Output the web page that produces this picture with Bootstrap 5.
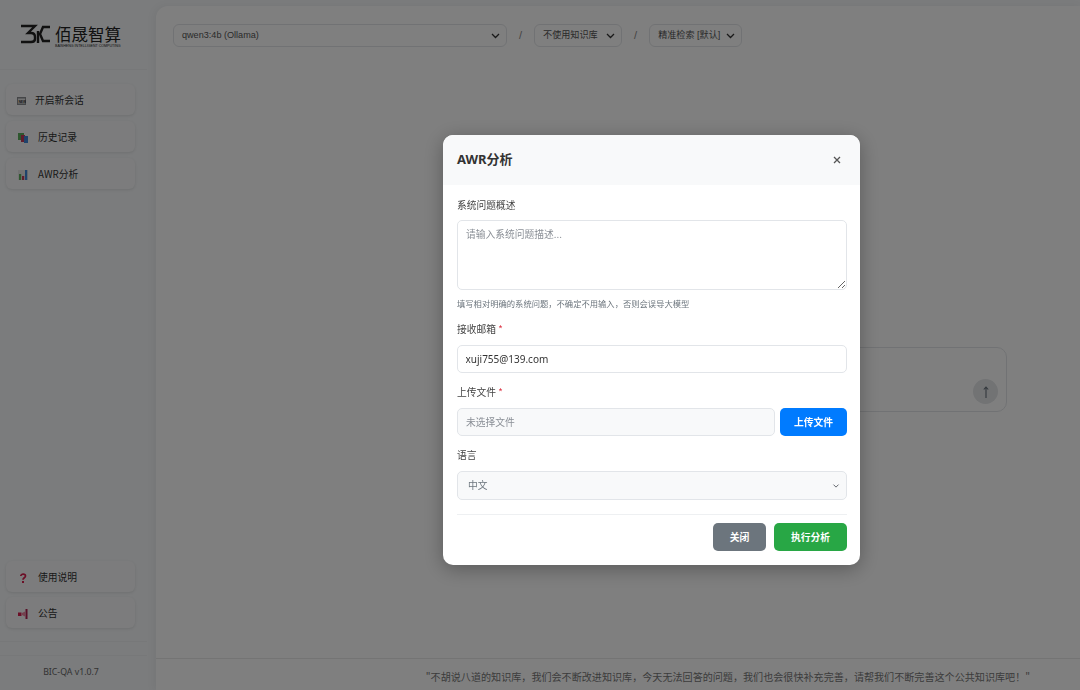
<!DOCTYPE html>
<html lang="zh-CN">
<head>
    <meta charset="UTF-8">
    <meta name="viewport" content="width=device-width, initial-scale=1.0">
    <title>BIC-QA</title>
    <link href="https://cdn.jsdelivr.net/npm/bootstrap@5.3.0/dist/css/bootstrap.min.css" rel="stylesheet">
    <script src="https://cdn.jsdelivr.net/npm/bootstrap@5.3.0/dist/js/bootstrap.bundle.min.js"></script>
    <style>
        html, body {
            height: 100%;
            overflow: hidden;
        }

        body {
            font-family: "Liberation Sans", "Noto Sans CJK SC", sans-serif;
            background-color: #f6f8fa;
            color: #333;
            font-size: 10px;
        }

        /* sidebar */
        .app-side {
            width: 156px;
            height: 690px;
            flex-shrink: 0;
        }

        .logo-box {
            height: 70px;
            padding: 24px 0 0 20px;
            border-bottom: 1px solid #eef0f2;
            margin-right: 9px;
        }

        .logo-name {
            font-family: "Noto Sans CJK SC", sans-serif;
            font-size: 16.5px;
            line-height: 20px;
            font-weight: 400;
            color: #222;
        }

        .logo-sub {
            font-size: 3.6px;
            line-height: 4px;
            color: #222;
            white-space: nowrap;
        }

        .side-stack {
            gap: 6px;
            padding-top: 14px;
        }

        .side-stack-low {
            gap: 5px;
            margin-top: auto;
            margin-bottom: 13px;
        }

        .side-btn {
            width: 129px;
            height: 31px;
            margin-left: 6px;
            padding-top: 2px;
            background: #f8f9fa;
            border-radius: 6px;
            box-shadow: 0 1px 3px rgba(0, 0, 0, 0.1);
            font-family: "Noto Sans CJK SC", sans-serif;
            font-size: 9.75px;
            color: #333;
            padding-left: 12px;
            gap: 10px;
        }

        .side-btn.side-new {
            padding-left: 11px;
            gap: 9px;
        }

        .side-btn svg {
            flex-shrink: 0;
        }

        .side-foot {
            margin-right: 9px;
            height: 49px;
            border-top: 1px solid #eef0f2;
        }

        .side-foot-inner {
            margin-top: 13px;
            padding: 10px 5px 0 0;
            border-top: 1px solid #eef0f2;
            text-align: center;
            font-size: 8.75px;
            font-family: "Noto Sans", sans-serif;
            color: #666;
        }

        /* main */
        .app-main {
            margin-top: 6px;
            height: 684px;
            background: #fff;
            border-top-left-radius: 12px;
            box-shadow: -2px 0 8px rgba(0, 0, 0, 0.05);
            position: relative;
        }

        .top-row {
            padding: 18px 0 0 17px;
            gap: 12px;
        }

        .top-select {
            height: 23px;
            border: 1px solid #e3e5e8;
            border-radius: 6px;
            padding: 0 6px 0 8px;
            font-size: 9.1px;
            color: #555;
        }

        .slash-mark {
            font-size: 11px;
            color: #888;
        }

        .ask-box {
            position: absolute;
            left: 320px;
            top: 341px;
            width: 531px;
            height: 65px;
            border: 1px solid #e3e5e8;
            border-radius: 10px;
        }

        .send-btn {
            position: absolute;
            right: 8px;
            bottom: 7px;
            width: 25px;
            height: 25px;
            border-radius: 50%;
            background: #e4e6e9;
        }

        .quote-bar {
            position: absolute;
            left: 0;
            right: 0;
            bottom: 0;
            height: 32px;
            border-top: 1px solid #e8e8e8;
            padding: 10px 50px 0 0;
            text-align: right;
            font-family: "Noto Sans CJK SC", sans-serif;
            font-size: 10.08px;
            color: #777;
        }

        /* modal */
        .awr-dialog {
            width: 417px;
            max-width: 417px;
            margin: 135px 0 0 443px;
        }

        .awr-content {
            border: 0;
            border-radius: 10px;
            height: 430px;
            box-shadow: 0 4px 20px rgba(0, 0, 0, 0.3);
            font-family: "Noto Sans CJK SC", sans-serif;
            overflow: hidden;
        }

        .awr-head {
            height: 50px;
            background: #f8f9fa;
            border: 0;
            padding: 0 19px 0 14px;
        }

        .awr-title {
            font-size: 13px;
            font-weight: 700;
            color: #333;
            font-family: "Noto Sans", "Noto Sans CJK SC", sans-serif;
        }

        .awr-close {
            background: none;
            border: 0;
            padding: 0;
            line-height: 0;
        }

        .awr-body {
            padding: 13px 13px 0 14px;
        }

        .awr-label {
            font-size: 9.75px;
            line-height: 15px;
            color: #444;
            margin-bottom: 8px;
            display: block;
        }

        .awr-label-first {
            margin-bottom: 7px;
        }

        .awr-req {
            color: #dc3545;
        }

        .awr-input {
            font-family: "Noto Sans", "Noto Sans CJK SC", sans-serif;
            font-size: 10px;
            color: #333;
            border: 1px solid #e2e5e9;
            border-radius: 5px;
            height: 28px;
            padding: 0 8px 0 7.5px;
        }

        textarea.awr-input {
            font-family: "Noto Sans CJK SC", sans-serif;
            font-size: 9.75px;
            height: 70px;
            padding: 6px 8px;
            line-height: 15px;
        }

        .awr-input::placeholder {
            color: #8a8f96;
        }

        .awr-hint {
            font-size: 8.3px;
            line-height: 12px;
            color: #6c757d;
            margin-top: 7px;
            margin-bottom: 13px;
        }

        .awr-group {
            margin-bottom: 12px;
        }

        .awr-file {
            height: 28px;
            background: #f8f9fa;
            border: 1px solid #e2e5e9;
            border-radius: 5px;
            padding: 0 8px;
            font-size: 9.75px;
            color: #8a8f96;
        }

        .awr-upload, .awr-act {
            font-size: 9.75px;
            font-weight: 700;
            border-radius: 5px;
            border: 0;
            padding: 0;
            height: 28px;
        }

        .awr-upload {
            width: 67px;
            background: #007bff;
        }

        .awr-file-row {
            gap: 5px;
        }

        .awr-picker {
            font-family: "Noto Sans CJK SC", sans-serif;
            font-size: 9.75px;
            height: 29px;
            padding: 0 8px 0 10px;
            background-color: #f8f9fa;
            background-position: right 6px center;
            background-size: 8px 6px;
            border: 1px solid #e2e5e9;
            border-radius: 5px;
            color: #6c757d;
        }

        .awr-foot {
            margin-top: 14px;
            padding-top: 8px;
            border-top: 1px solid #eef0f2;
            gap: 8px;
        }

        .awr-close-btn {
            width: 53px;
            background: #6c757d;
        }

        .awr-run-btn {
            width: 73px;
            background: #28a745;
        }
    </style>
</head>

<body>

    <div class="d-flex">
        <!-- Sidebar -->
        <div class="app-side d-flex flex-column">
            <div class="logo-box d-flex gap-1">
                <svg width="31" height="20" viewBox="0 0 31 20" fill="none" stroke="#222" stroke-width="2.4">
                    <path d="M1 2H15L8 9H11Q15 9 15 13V15Q15 18 11 18H1"/>
                    <path d="M18 7V19"/>
                    <path d="M30 3H23L20 10L23 17H30"/>
                </svg>
                <div>
                    <div class="logo-name">佰晟智算</div>
                    <div class="logo-sub">BAISHENG INTELLIGENT COMPUTING</div>
                </div>
            </div>
            <div class="side-stack d-flex flex-column">
                <div class="side-btn side-new d-flex align-items-center">
                    <svg width="9" height="8" viewBox="0 0 9 8"><rect width="9" height="8" fill="#8b8d90"/><rect x="1" y="1.500" width="7" height="5" fill="#e4e4e4"/><text x="1.400" y="5.600" font-size="3.400" font-family="Liberation Sans" font-weight="700" fill="#333">NEW</text></svg>
                    开启新会话
                </div>
                <div class="side-btn d-flex align-items-center">
                    <svg width="10" height="10" viewBox="0 0 10 10"><rect x="0" y="0" width="6" height="7" fill="#5cae5c"/><rect x="3" y="2" width="4" height="7" fill="#c23a5a"/><rect x="6" y="3" width="4" height="7" fill="#3f86d8"/></svg>
                    历史记录
                </div>
                <div class="side-btn d-flex align-items-center">
                    <svg width="10" height="10" viewBox="0 0 10 10"><rect width="10" height="10" fill="#e6e6e6"/><rect x="1" y="4" width="2.200" height="6" fill="#5cae5c"/><rect x="4" y="6" width="2.200" height="4" fill="#c23a5a"/><rect x="7" y="0" width="2.200" height="10" fill="#3f86d8"/></svg>
                    AWR分析
                </div>
            </div>
            <div class="side-stack-low d-flex flex-column">
                <div class="side-btn d-flex align-items-center">
                    <svg width="10" height="10" viewBox="0 0 10 10" fill="none"><path d="M2.800 3C2.800 0.500 7.500 0.500 7.500 3 7.500 4.800 5 4.800 5 6.800" stroke="#d81e4f" stroke-width="1.700"/><rect x="4" y="8" width="2" height="2" fill="#d81e4f"/></svg>
                    使用说明
                </div>
                <div class="side-btn d-flex align-items-center">
                    <svg width="10" height="10" viewBox="0 0 10 10"><rect x="0" y="3.500" width="3.500" height="3.500" fill="#d81e4f"/><path d="M4 4L7 2.500V7.500L4 6z" fill="#e8839c"/><rect x="7.500" y="0" width="2" height="10" fill="#b02050"/></svg>
                    公告
                </div>
            </div>
            <div class="side-foot">
                <div class="side-foot-inner">BIC-QA v1.0.7</div>
            </div>
        </div>

        <!-- Main -->
        <div class="app-main flex-grow-1">
            <div class="top-row d-flex align-items-center">
                <div class="top-select d-flex align-items-center justify-content-between" style="width: 334px">
                    qwen3:4b (Ollama)
                    <svg width="9" height="6" viewBox="0 0 9 6" fill="none" stroke="#333" stroke-width="1.300"><path d="M1 1l3.500 3.500L8 1"/></svg>
                </div>
                <span class="slash-mark">/</span>
                <div class="top-select d-flex align-items-center justify-content-between" style="width: 88px">
                    不使用知识库
                    <svg width="9" height="6" viewBox="0 0 9 6" fill="none" stroke="#333" stroke-width="1.300"><path d="M1 1l3.500 3.500L8 1"/></svg>
                </div>
                <span class="slash-mark">/</span>
                <div class="top-select d-flex align-items-center justify-content-between" style="width: 93px">
                    精准检索 [默认]
                    <svg width="9" height="6" viewBox="0 0 9 6" fill="none" stroke="#333" stroke-width="1.300"><path d="M1 1l3.500 3.500L8 1"/></svg>
                </div>
            </div>

            <div class="ask-box">
                <div class="send-btn d-flex align-items-center justify-content-center">
                    <svg width="6" height="12" viewBox="0 0 6 12" fill="none" stroke="#66707a" stroke-width="1.100"><path d="M3 12V1M0.800 3.500L3 1l2.200 2.500"/></svg>
                </div>
            </div>

            <div class="quote-bar">"不胡说八道的知识库，我们会不断改进知识库，今天无法回答的问题，我们也会很快补充完善，请帮我们不断完善这个公共知识库吧！"</div>
        </div>
    </div>

    <!-- AWR modal -->
    <div class="modal-backdrop show"></div>
    <div class="modal d-block" tabindex="-1">
        <div class="modal-dialog awr-dialog">
            <div class="modal-content awr-content">
                <div class="modal-header awr-head d-flex justify-content-between align-items-center">
                    <span class="awr-title">AWR分析</span>
                    <button class="awr-close" type="button" aria-label="关闭">
                        <svg width="8" height="8" viewBox="0 0 8 8" fill="none" stroke="#555" stroke-width="1.300"><path d="M1 1l6 6M7 1L1 7"/></svg>
                    </button>
                </div>
                <div class="modal-body awr-body">
                    <label class="awr-label awr-label-first">系统问题概述</label>
                    <textarea class="form-control awr-input" placeholder="请输入系统问题描述..."></textarea>
                    <div class="awr-hint">填写相对明确的系统问题，不确定不用输入，否则会误导大模型</div>

                    <div class="awr-group">
                        <label class="awr-label">接收邮箱 <span class="awr-req">*</span></label>
                        <input class="form-control awr-input" type="text" value="xuji755@139.com">
                    </div>

                    <div class="awr-group">
                        <label class="awr-label">上传文件 <span class="awr-req">*</span></label>
                        <div class="awr-file-row d-flex">
                            <div class="awr-file flex-grow-1 d-flex align-items-center">未选择文件</div>
                            <button class="btn btn-primary awr-upload" type="button">上传文件</button>
                        </div>
                    </div>

                    <label class="awr-label">语言</label>
                    <select class="form-select awr-picker">
                        <option>中文</option>
                    </select>

                    <div class="awr-foot d-flex justify-content-end">
                        <button class="btn btn-secondary awr-act awr-close-btn" type="button">关闭</button>
                        <button class="btn btn-success awr-act awr-run-btn" type="button">执行分析</button>
                    </div>
                </div>
            </div>
        </div>
    </div>

</body>

</html>
